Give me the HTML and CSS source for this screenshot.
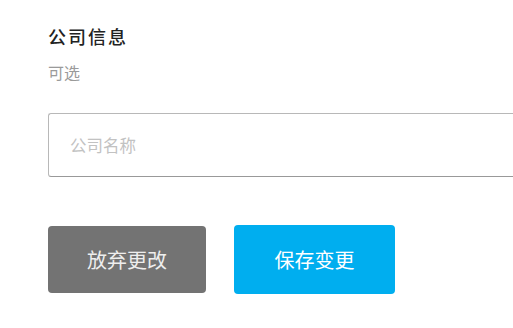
FILE: index.html
```html
<!DOCTYPE html>
<html lang="zh">
<head>
<meta charset="utf-8">
<link rel="stylesheet" href="styles.css">
</head>
<body>
<main class="form">
  <h2 class="title">公司信息</h2>
  <p class="hint">可选</p>
  <div class="field">
    <input class="input" type="text" placeholder="公司名称">
  </div>
  <div class="actions">
    <button class="btn btn-discard" type="button">放弃更改</button>
    <button class="btn btn-save" type="button">保存变更</button>
  </div>
</main>
</body>
</html>
```

FILE: styles.css
```css
html, body {
  margin: 0;
  padding: 0;
  background: #ffffff;
}
body {
  font-family: "Noto Sans CJK SC", "Noto Sans", sans-serif;
  width: 513px;
  height: 328px;
  overflow: hidden;
}
.form {
  padding: 24px 0 0 48px;
  display: flex;
  flex-direction: column;
}
.title {
  margin: 0;
  font-size: 18px;
  line-height: 24px;
  font-weight: 500;
  color: #222222;
  letter-spacing: 2px;
}
.hint {
  margin: 14px 0 0;
  font-size: 16px;
  line-height: 20px;
  color: #9a9a9a;
}
.field {
  margin-top: 31px;
}
.input {
  box-sizing: border-box;
  width: 465px;
  height: 64px;
  border: 1px solid #b8b8b8;
  border-bottom-color: #999999;
  border-right: none;
  border-radius: 3px 0 0 3px;
  padding: 0 21px;
  font-family: inherit;
  font-size: 16.5px;
  color: #333;
  background: #fff;
  outline: none;
}
.input::placeholder {
  color: #c2c2c2;
}
.actions {
  margin-top: 48px;
  display: flex;
  align-items: center;
  gap: 28px;
}
.btn {
  border: none;
  border-radius: 4px;
  font-family: inherit;
  font-size: 20px;
  color: #ffffff;
  padding: 0;
  cursor: pointer;
}
.btn-discard {
  width: 158px;
  height: 67px;
  background: #737373;
  color: #eeeeee;
}
.btn-save {
  width: 161px;
  height: 69px;
  background: #00aeef;
}
```
